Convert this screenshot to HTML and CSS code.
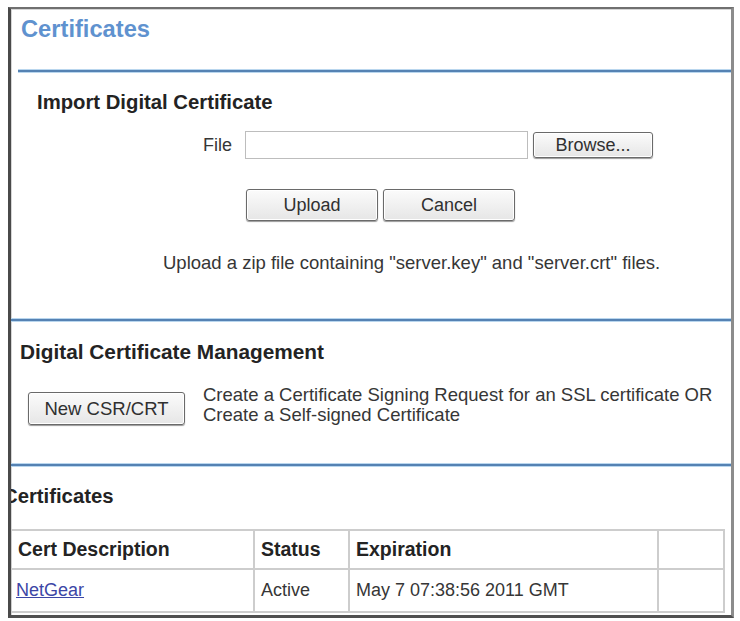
FILE: index.html
```html
<!DOCTYPE html>
<html>
<head>
<meta charset="utf-8">
<link rel="stylesheet" href="styles.css">
</head>
<body>
<div class="frame">
  <div class="header">
    <h1 class="title">Certificates</h1>
  </div>
  <div class="rule rule-first"></div>

  <div class="section-import">
    <h2 class="heading heading-import">Import Digital Certificate</h2>
    <div class="file-row">
      <span class="file-label">File</span>
      <span class="file-input"></span>
      <button class="btn btn-browse">Browse...</button>
    </div>
    <div class="action-row">
      <button class="btn btn-action">Upload</button>
      <button class="btn btn-action">Cancel</button>
    </div>
    <p class="notice">Upload a zip file containing "server.key" and "server.crt" files.</p>
  </div>
  <div class="rule rule-second"></div>

  <div class="section-manage">
    <h2 class="heading heading-manage">Digital Certificate Management</h2>
    <div class="manage-row">
      <button class="btn btn-csr">New CSR/CRT</button>
      <p class="manage-text">Create a Certificate Signing Request for an SSL certificate OR<br>Create a Self-signed Certificate</p>
    </div>
  </div>
  <div class="rule rule-third"></div>

  <div class="section-list">
    <h2 class="heading heading-list">Certificates</h2>
    <table class="cert-table">
      <colgroup>
        <col class="col-desc">
        <col class="col-status">
        <col class="col-exp">
        <col class="col-extra">
      </colgroup>
      <tr class="head-row">
        <th>Cert Description</th>
        <th>Status</th>
        <th>Expiration</th>
        <th></th>
      </tr>
      <tr class="data-row">
        <td><a href="#" class="cert-link">NetGear</a></td>
        <td>Active</td>
        <td>May 7 07:38:56 2011 GMT</td>
        <td></td>
      </tr>
    </table>
  </div>
</div>
</body>
</html>
```

FILE: styles.css
```css
html, body {
  margin: 0;
  padding: 0;
  background: #ffffff;
}

body {
  font-family: "Liberation Sans", Arial, sans-serif;
  color: #363636;
}

.frame {
  box-sizing: border-box;
  margin: 7px 0 0 8px;
  width: 726px;
  height: 611px;
  border-left: 3px solid #4a4a4a;
  border-top: 2px solid #707070;
  border-right: 3px solid #8c8c8c;
  border-bottom: 3px solid #505050;
  background: #ffffff;
  overflow: hidden;
  box-shadow: inset 1px 1px 0 #d6d6d6;
}

.header {
  height: 61px;
  box-sizing: border-box;
  padding: 6px 0 0 10px;
}

.title {
  margin: 0;
  font-size: 23.7px;
  line-height: 28px;
  font-weight: bold;
  color: #5f92cf;
}

.rule {
  height: 2px;
  background: #5582b3;
  box-shadow: 0 -1px 0 #b9d6ee, 0 1px 0 #b9d6ee;
}

.rule-first {
  margin-left: 7px;
}

.rule-second {
  margin-top: 45px;
}

.rule-third {
  margin-top: 39px;
}

.heading {
  margin: 0;
  font-size: 20.3px;
  line-height: 24px;
  font-weight: bold;
  color: #232323;
}

.heading-import {
  margin-top: 18px;
  padding-left: 26px;
}

.file-row {
  margin-top: 17px;
  height: 28px;
  display: flex;
  align-items: center;
  padding-left: 192px;
}

.file-label {
  font-size: 18px;
  color: #363636;
  margin-right: 13px;
}

.file-input {
  box-sizing: border-box;
  width: 283px;
  height: 28px;
  border: 1px solid #bdbdbd;
  background: #ffffff;
  margin-right: 5px;
}

.btn {
  box-sizing: border-box;
  font-family: "Liberation Sans", Arial, sans-serif;
  font-size: 18px;
  color: #303030;
  background: linear-gradient(#fbfbfb, #e6e6e6);
  border: 1px solid #6a6a6a;
  border-radius: 3px;
  box-shadow: inset 0 0 0 1px #ffffff, 0 1px 1px #9a9a9a;
  padding: 0;
  margin: 0;
}

.btn-browse {
  width: 120px;
  height: 26px;
}

.action-row {
  margin-top: 30px;
  padding-left: 235px;
  display: flex;
  gap: 5px;
}

.btn-action {
  width: 132px;
  height: 32px;
}

.notice {
  margin: 31px 0 0 0;
  padding-left: 152px;
  font-size: 18.5px;
  line-height: 22px;
  color: #363636;
}

.heading-manage {
  margin-top: 19px;
  padding-left: 9px;
  font-size: 20.8px;
}

.manage-row {
  margin-top: 21px;
  display: flex;
  align-items: flex-start;
}

.btn-csr {
  margin: 7px 0 0 17px;
  width: 157px;
  height: 33px;
  font-size: 18.5px;
}

.manage-text {
  margin: 0 0 0 18px;
  font-size: 18.5px;
  line-height: 20px;
  color: #363636;
}

.heading-list {
  margin-top: 18px;
  margin-left: -8px;
}

.cert-table {
  margin-top: 21px;
  margin-left: -1px;
  width: 713px;
  border-collapse: collapse;
  table-layout: fixed;
}

.col-desc { width: 243px; }
.col-status { width: 95px; }
.col-exp { width: 309px; }
.col-extra { width: 66px; }

.cert-table th,
.cert-table td {
  border: 2px solid #cdcdcd;
  text-align: left;
  padding: 0 0 0 6px;
  white-space: nowrap;
}

.cert-table th {
  height: 37px;
  font-size: 19.5px;
  font-weight: bold;
  color: #232323;
}

.cert-table td {
  height: 41px;
  font-size: 18px;
  color: #363636;
}

.cert-table td:first-child {
  padding-left: 4px;
}

.cert-link {
  color: #3c46a6;
  text-decoration: underline;
}
```
